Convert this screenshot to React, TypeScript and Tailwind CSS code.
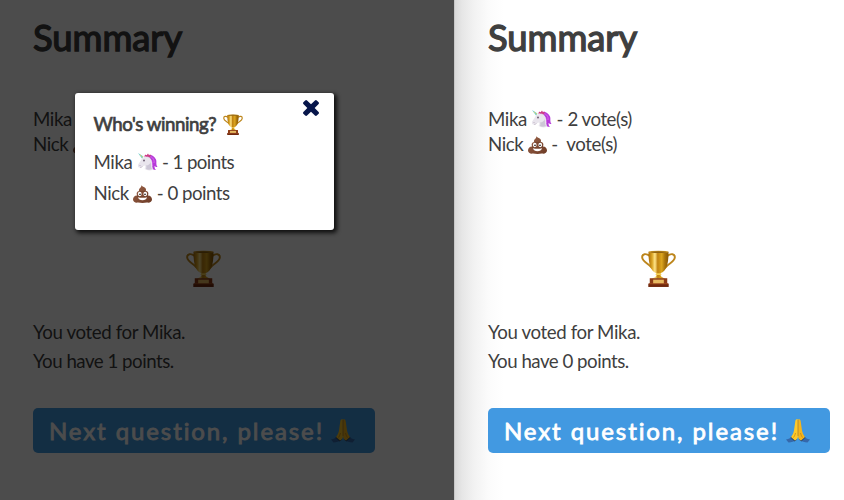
interface IconProps {
  className: string;
}

function CloseIcon({ className }: IconProps) {
  return (
    <svg className={className} viewBox="110 366 1188 1188" fill="currentColor" aria-hidden="true">
      <path d="M1298 1322q0 40-28 68l-136 136q-28 28-68 28t-68-28l-294-294-294 294q-28 28-68 28t-68-28l-136-136q-28-28-28-68t28-68l294-294-294-294q-28-28-28-68t28-68l136-136q28-28 68-28t68 28l294 294 294-294q28-28 68-28t68 28l136 136q28 28 28 68t-28 68l-294 294 294 294q28 28 28 68z" />
    </svg>
  );
}

function TrophyIcon({ className }: IconProps) {
  return (
    <svg className={className} viewBox="0 0 36 38" aria-hidden="true">
      <defs>
        <linearGradient id="cup" x1="0" x2="1" y1="0" y2="0">
          <stop offset="0" stopColor="#a96c08" />
          <stop offset=".18" stopColor="#dba525" />
          <stop offset=".32" stopColor="#ffe58a" />
          <stop offset=".46" stopColor="#c08210" />
          <stop offset=".66" stopColor="#dca61f" />
          <stop offset=".82" stopColor="#a8730b" />
          <stop offset="1" stopColor="#855605" />
        </linearGradient>
      </defs>
      <path
        d="M9 6C5 3 1 4 1.200 7.500 1.500 12.500 7 13 11.500 18.500M27 6c4-3 8-2 7.800 1.500-.3 5-5.800 5.500-10.300 11"
        fill="none"
        stroke="#bd861c"
        strokeWidth="2"
      />
      <path
        d="M7.700 1.700c0 11 1.300 20 8.300 22.200.4 2.500-.6 4.200-5.200 5.600h14.400c-4.600-1.400-5.600-3.100-5.200-5.600 7-2.200 8.300-11.200 8.300-22.200z"
        fill="url(#cup)"
      />
      <ellipse cx="18" cy="1.900" rx="10.300" ry="1.200" fill="#c9962a" />
      <ellipse cx="18" cy="2.100" rx="8.500" ry=".6" fill="#7d5208" />
      <path d="M15.500 24h5l.6 1.700h-6.200z" fill="#f3cf55" />
      <path d="M9 29h18v6H9z" fill="#8c3b16" />
      <path d="M7.500 34.500h21V38h-21z" fill="#70280d" />
      <path d="M8.200 34.200h19.600v1H8.200z" fill="#a44c20" />
      <path d="M12.500 30.500h11v3.700h-11z" fill="#e7b960" />
    </svg>
  );
}

function UnicornIcon({ className }: IconProps) {
  return (
    <svg className={className} viewBox="0 0 40 36" aria-hidden="true">
      <path
        d="M16 5c8-4 17-1 21 8 2 6-1 9 3 15-3 0-5-1-6-2 0 4 1 6 3 8-5 0-9-2-10-6L20 13z"
        fill="#b63ad9"
      />
      <path d="M24 7c7 1 10 7 9 13M22 11c6 2 8 8 8 15" fill="none" stroke="#df7bee" strokeWidth="1.500" />
      <path
        d="M9 11c4-3 8-5 13-3 6 3 8 9 7 16l2 9c-5 3-12 2-17-1 2-3 2-5 1-7-3 0-5 3-8 4-4 1-7-1-6-5 1-3 5-7 8-13z"
        fill="#e9e5ed"
      />
      <path d="M17 25c5 0 8-3 9-7 2 6 0 11 3 14-4 2-9 2-12 0 1-3 1-5 0-7z" fill="#cdc7d6" />
      <path d="m20 9 1-7 4 8z" fill="#d9d2e0" />
      <path d="m13 7 3-4 2 2 3-4 2 4 4-2-2 6-5-2z" fill="#cf3a80" />
      <path d="M1 0 12 7l-3 4z" fill="#62ccd8" />
      <path d="m4 3 3 1-1 3zM8 5l3 2-2 3z" fill="#ead45e" />
      <ellipse cx="13" cy="15" rx="1.400" ry="2" fill="#35243d" />
      <circle cx="5" cy="25" r=".8" fill="#87768e" />
      <path d="M5 29c2 0 4-1 5-2" fill="none" stroke="#a999ae" />
    </svg>
  );
}

function PoopIcon({ className }: IconProps) {
  return (
    <svg className={className} viewBox="0 0 38 36" aria-hidden="true">
      <defs>
        <linearGradient id="poop" x1="0" x2="1" y1="0" y2="1">
          <stop offset="0" stopColor="#9a6248" />
          <stop offset="1" stopColor="#6d3b26" />
        </linearGradient>
      </defs>
      <path
        d="M17 0c1 4 9 4 9 9 0 1 0 2-1 3 5 0 7 4 5 9 5 0 8 4 8 8 0 5-5 7-10 6-6 1-12 1-18 0-5 1-10-1-10-6 0-4 3-8 8-8-2-5 0-8 4-9-1-6 5-6 5-12z"
        fill="url(#poop)"
      />
      <path d="M13 12c5 2 9 2 13-1M8 22c7 3 15 2 22-1" fill="none" stroke="#623824" />
      <ellipse cx="13.500" cy="18" rx="3.700" ry="4.300" fill="#fff" />
      <ellipse cx="24.500" cy="18" rx="3.700" ry="4.300" fill="#fff" />
      <circle cx="14" cy="18.500" r="1.700" fill="#2b211f" />
      <circle cx="24" cy="18.500" r="1.700" fill="#2b211f" />
      <path d="M10 24.500c5 1.500 13 1.500 18 0-1 8-17 8-18 0z" fill="#fff" />
    </svg>
  );
}

function PrayIcon({ className }: IconProps) {
  return (
    <svg className={className} viewBox="0 0 48 48" aria-hidden="true">
      <path d="M0 41c6-1 10-4 13-7l8 8c-5 3-10 5-16 5z" fill="#3568ab" />
      <path d="M48 41c-6-1-10-4-13-7l-8 8c5 3 10 5 16 5z" fill="#3568ab" />
      <path d="m9 37 5-4 8 8-5 4zM39 37l-5-4-8 8 5 4z" fill="#244778" />
      <path
        d="M23.800 1c-4-2-5 1-5.400 5L16 23c-1 5-3 9-6 13l8 7c4-2 6-4 5.800-9z"
        fill="#ffc928"
      />
      <path
        d="M24.200 1c4-2 5 1 5.400 5L32 23c1 5 3 9 6 13l-8 7c-4-2-6-4-5.800-9z"
        fill="#f5b51d"
      />
      <path d="M24 2v32M19 28c-1 4-2 6-4 9M29 28c1 4 2 6 4 9" fill="none" stroke="#b97811" strokeWidth="1.300" />
    </svg>
  );
}

interface SummaryScreenProps {
  points: number;
}

function SummaryScreen({ points }: SummaryScreenProps) {
  return (
    <div className="flex w-[342px] flex-col items-start text-[18.700px] tracking-[-0.390px] whitespace-pre text-[#3f3f3f]">
      <h1 className="mt-[13px] h-12 text-[36.400px] leading-[48px] font-normal tracking-[-0.050px] [-webkit-text-stroke:1.400px_currentColor]">
        Summary
      </h1>
      <div className="mt-[46px] leading-[25px]">
        <p>
          Mika <UnicornIcon className="inline-block h-[18px] w-[21px] align-[-2px]" />
          <span className="tracking-[-0.480px]"> - 2 vote(s)</span>
        </p>
        <p>
          Nick <PoopIcon className="inline-block h-[18px] w-[19px] align-[-3px]" /> -  vote(s)
        </p>
      </div>
      <TrophyIcon className="mt-[93px] mr-0.5 h-[37px] w-[35px] self-center" />
      <div className="mt-[31px] leading-[29px]">
        <p>You voted for Mika.</p>
        <p className="tracking-[-0.500px]">You have {points} points.</p>
      </div>
      <button className="mt-8 flex h-[45px] w-full items-center rounded-[5px] bg-[#4299e1] pl-4 text-2xl tracking-[1.900px] text-white [-webkit-text-stroke:0.800px_currentColor]">
        Next question, please!
        <PrayIcon className="ml-[7px] h-6 w-6" />
      </button>
    </div>
  );
}

function ScoreModal() {
  return (
    <div className="absolute top-[93px] left-[75px] h-[137px] w-[259px] rounded-[3px] bg-white pt-[18px] pl-[18.500px] text-[18.700px] tracking-[-0.390px] whitespace-pre text-[#3f3f3f] shadow-[2px_2px_4px_1px_rgba(0,0,0,0.8)]">
      <button className="absolute top-[7px] right-[15px]" aria-label="Close">
        <CloseIcon className="h-4 w-4 text-[#07164b]" />
      </button>
      <h2 className="flex h-[27px] items-center tracking-[-0.450px] [-webkit-text-stroke:0.700px_currentColor]">
        Who's winning?
        <TrophyIcon className="ml-[7px] h-[21px] w-[20px]" />
      </h2>
      <div className="mt-[9px] leading-[31px]">
        <p>
          Mika <UnicornIcon className="inline-block h-[18px] w-[21px] align-[-2px]" />
          <span className="tracking-[-0.600px]"> - 1 points</span>
        </p>
        <p>
          Nick <PoopIcon className="inline-block h-[18px] w-[19px] align-[-3px]" />
          <span className="tracking-[-0.500px]"> - 0 points</span>
        </p>
      </div>
    </div>
  );
}

export default function App() {
  return (
    <main className="flex h-[500px] w-[844px] overflow-hidden bg-white font-['Lato',sans-serif]">
      <section className="relative w-[454px] shrink-0 pl-[33px]">
        <SummaryScreen points={1} />
        <div className="absolute inset-0 bg-black/70" />
        <ScoreModal />
      </section>
      <section className="w-[390px] bg-[linear-gradient(to_right,#b5b5b5_0px,#d9d9d9_1px,#e6e6e6_8px,#f2f2f2_20px,#fbfbfb_34px,#ffffff_50px)] pl-[34px]">
        <SummaryScreen points={0} />
      </section>
    </main>
  );
}
